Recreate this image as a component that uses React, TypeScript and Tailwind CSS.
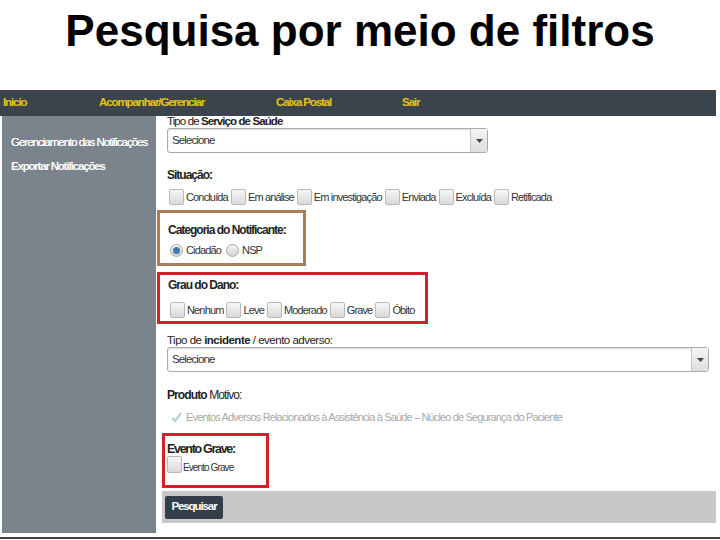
import React from "react"

const navItems = [
  { name: "Inicio", w: "w-[96px]" },
  { name: "Acompanhar/Gerenciar", w: "w-[177px]" },
  { name: "Caixa Postal", w: "w-[126px]" },
  { name: "Sair", w: "w-[40px]" },
]

function Box({ className = "" }: { className?: string }) {
  return (
    <span
      className={
        "inline-block h-[16px] w-[15px] shrink-0 rounded-[2px] border border-[#b9b9b9] bg-linear-to-b from-[#f7f7f7] to-[#d9d9d9] " +
        className
      }
    />
  )
}

function Radio({ checked = false }: { checked?: boolean }) {
  return (
    <span className="flex h-[13px] w-[13px] shrink-0 items-center justify-center rounded-full border border-[#a8a8a8] bg-linear-to-b from-[#f5f5f5] to-[#d2d2d2]">
      {checked && <span className="h-[7px] w-[7px] rounded-full bg-[#3f7cae]" />}
    </span>
  )
}

function Select({ w }: { w: string }) {
  return (
    <div className={"flex h-[25px] rounded-[3px] border border-[#aaaaaa] bg-white shadow-[inset_0_1px_2px_rgba(0,0,0,0.15)] " + w}>
      <div className="flex flex-1 items-center pl-[4px] text-[11.5px] tracking-[-0.9px] text-[#333]">Selecione</div>
      <div className="flex w-[17px] items-center justify-center border-l border-[#c4c4c4] bg-linear-to-b from-[#f4f4f4] to-[#dedede]">
        <svg width="7" height="4" viewBox="0 0 7 4">
          <path d="M0 0h7L3.5 4z" fill="#444" />
        </svg>
      </div>
    </div>
  )
}

function CheckRow({ items }: { items: string[] }) {
  return (
    <div className="flex h-[16px] items-center gap-[3px] whitespace-nowrap text-[11px] tracking-[-0.85px] text-[#333]">
      {items.map((item) => (
        <div key={item} className="flex items-center gap-[2px]">
          <Box />
          <span className="leading-[16px]">{item}</span>
        </div>
      ))}
    </div>
  )
}

export default function App() {
  return (
    <div className="relative h-[540px] w-[720px] overflow-hidden bg-white font-['Liberation_Sans',Arial,sans-serif]">
      {/* Title */}
      <div className="h-[88px] pt-[9px] text-center text-[44px] font-bold leading-[44px] text-black">
        Pesquisa por meio de filtros
      </div>

      {/* Screenshot */}
      <div className="mt-[2px] w-[716px] whitespace-nowrap">
        <nav className="flex h-[26px] items-center bg-[#3b444c] pl-[3px] text-[11.5px] font-bold tracking-[-1.1px] text-[#e5c41b]">
          {navItems.map((item) => (
            <span key={item.name} className={item.w}>
              {item.name}
            </span>
          ))}
        </nav>

        <div className="flex">
          {/* Sidebar */}
          <aside className="ml-[2px] flex h-[417px] w-[154px] flex-col gap-[12px] bg-[#7b848c] pl-[9px] pt-[20px] text-[11.5px] leading-[12px] tracking-[-1px] text-white">
            <span className="[text-shadow:0_0_0.5px_#fff]">Gerenciamento das Notificações</span>
            <span className="font-bold tracking-[-1.2px]">Exportar Notificações</span>
          </aside>

          {/* Filters */}
          <main className="flex flex-1 flex-col pl-[1px] text-[#222]">
            <div className="ml-[10px] h-[12px] text-[11.5px] leading-[10px] tracking-[-0.9px]">
              Tipo de <b>Serviço de Saúde</b>
            </div>
            <div className="ml-[10px]">
              <Select w="w-[321px]" />
            </div>

            <div className="ml-[10px] mt-[15px] h-[14px] text-[12px] font-bold leading-[14px] tracking-[-1px]">Situação:</div>
            <div className="ml-[12px] mt-[7px]">
              <CheckRow items={["Concluída", "Em análise", "Em investigação", "Enviada", "Excluída", "Retificada"]} />
            </div>

            {/* Categoria */}
            <div className="mt-[5px] h-[56px] w-[149px] border-[3px] border-[#a87c5c] pl-[8px] pt-[11px]">
              <div className="h-[12px] text-[12px] font-bold leading-[12px] tracking-[-1px]">Categoria do Notificante:</div>
              <div className="mt-[8px] flex h-[13px] items-center gap-[3px] pl-[2px] text-[11px] tracking-[-0.85px] text-[#333]">
                <Radio checked />
                <span className="mr-[2px]">Cidadão</span>
                <Radio />
                <span>NSP</span>
              </div>
            </div>

            {/* Grau do Dano */}
            <div className="mt-[6px] h-[52px] w-[271px] border-[3px] border-[#d5202b] pl-[8px] pt-[4px]">
              <div className="h-[12px] text-[12px] font-bold leading-[12px] tracking-[-1px]">Grau do Dano:</div>
              <div className="mt-[11px] pl-[2px]">
                <CheckRow items={["Nenhum", "Leve", "Moderado", "Grave", "Óbito"]} />
              </div>
            </div>

            <div className="ml-[10px] mt-[10px] h-[12px] text-[11.5px] leading-[12px] tracking-[-0.5px]">
              Tipo de <b>incidente</b> / evento adverso:
            </div>
            <div className="ml-[10px] mt-[1px]">
              <Select w="w-[542px]" />
            </div>

            <div className="ml-[10px] mt-[17px] h-[12px] text-[12px] leading-[12px] tracking-[-0.9px]">
              <b>Produto</b> Motivo:
            </div>
            <div className="ml-[13px] mt-[8px] flex h-[16px] items-center gap-[3px] text-[11px] tracking-[-0.85px] text-[#a9a9a9]">
              <svg width="13" height="13" viewBox="0 0 13 13">
                <path d="M2 7l3 3 6-8" fill="none" stroke="#b7cfe0" strokeWidth="2.2" />
              </svg>
              <span>Eventos Adversos Relacionados à Assistência à Saúde – Núcleo de Segurança do Paciente</span>
            </div>

            {/* Evento Grave */}
            <div className="ml-[5px] mt-[8px] h-[55px] w-[107px] border-[3px] border-[#d5202b] pl-[2px] pt-[6px]">
              <div className="h-[14px] text-[12.5px] font-bold leading-[14px] tracking-[-1.3px]">Evento Grave:</div>
              <div className="flex items-end gap-[1px]">
                <Box className="h-[17px] w-[14px]" />
                <span className="text-[10px] leading-[11px] tracking-[-0.9px] text-[#333]">Evento Grave</span>
              </div>
            </div>

            <div className="ml-[5px] mt-[3px] flex h-[32px] w-[554px] items-center bg-[#c8c8c8] pl-[3px]">
              <button className="h-[23px] w-[58px] rounded-[2px] bg-[#333e48] text-[11.5px] font-bold tracking-[-1.1px] text-white">
                Pesquisar
              </button>
            </div>
          </main>
        </div>
      </div>

      <div className="mt-[4px] h-[2px] w-[720px] bg-[#3f3f3f]" />
    </div>
  )
}
